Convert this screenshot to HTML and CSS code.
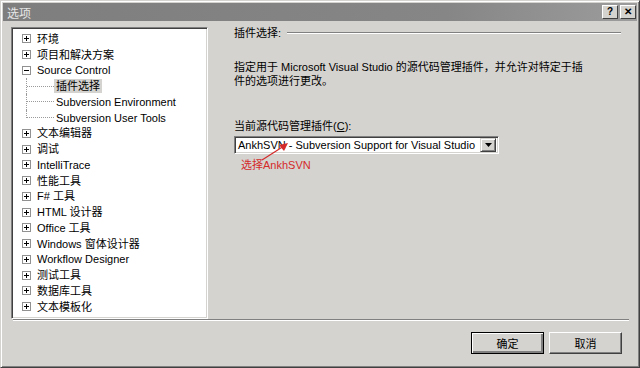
FILE: index.html
```html
<!DOCTYPE html>
<html>

<head>
    <meta charset="utf-8">
    <link rel="stylesheet" href="styles.css">
</head>

<body>
    <div class="window">
        <div class="titlebar">
            <span class="title">选项</span>
            <div class="caption-buttons">
                <span class="cap-btn">?</span>
                <span class="cap-btn">✕</span>
            </div>
        </div>

        <div class="content">
            <div class="main">
                <!-- Options tree -->
                <div class="tree">
                    <div class="row"><span class="exp"></span><span class="label">环境</span></div>
                    <div class="row"><span class="exp"></span><span class="label">项目和解决方案</span></div>
                    <div class="row"><span class="exp open"></span><span class="label">Source Control</span></div>
                    <div class="row child"><span class="branch"></span><span class="label selected">插件选择</span></div>
                    <div class="row child"><span class="branch"></span><span class="label">Subversion Environment</span></div>
                    <div class="row child"><span class="branch last"></span><span class="label">Subversion User Tools</span></div>
                    <div class="row"><span class="exp"></span><span class="label">文本编辑器</span></div>
                    <div class="row"><span class="exp"></span><span class="label">调试</span></div>
                    <div class="row"><span class="exp"></span><span class="label">IntelliTrace</span></div>
                    <div class="row"><span class="exp"></span><span class="label">性能工具</span></div>
                    <div class="row"><span class="exp"></span><span class="label">F# 工具</span></div>
                    <div class="row"><span class="exp"></span><span class="label">HTML 设计器</span></div>
                    <div class="row"><span class="exp"></span><span class="label">Office 工具</span></div>
                    <div class="row"><span class="exp"></span><span class="label">Windows 窗体设计器</span></div>
                    <div class="row"><span class="exp"></span><span class="label">Workflow Designer</span></div>
                    <div class="row"><span class="exp"></span><span class="label">测试工具</span></div>
                    <div class="row"><span class="exp"></span><span class="label">数据库工具</span></div>
                    <div class="row"><span class="exp"></span><span class="label">文本模板化</span></div>
                </div>

                <!-- Settings page -->
                <div class="pane">
                    <div class="group-head">
                        <span>插件选择:</span>
                        <span class="rule"></span>
                    </div>
                    <p class="desc">指定用于 Microsoft Visual Studio 的源代码管理插件，并允许对特定于插件的选项进行更改。</p>
                    <div class="field-label">当前源代码管理插件(<u>C</u>):</div>
                    <div class="combo">
                        <span class="combo-text">AnkhSVN - Subversion Support for Visual Studio</span>
                        <span class="combo-btn">
                            <svg width="7" height="4" viewBox="0 0 7 4"><path d="M0 0h7L3.5 4z" fill="#000"/></svg>
                        </span>
                    </div>

                    <!-- red annotation drawn over the dialog -->
                    <svg class="note-arrow" width="34" height="22" viewBox="0 0 34 22">
                        <path d="M4 19 L26 5" stroke="#d42a2a" stroke-width="1.2" fill="none"/>
                        <path d="M30 2 L21 4 L26 10 z" fill="#d42a2a"/>
                    </svg>
                    <div class="note">选择AnkhSVN</div>
                </div>
            </div>

            <div class="footer">
                <button class="btn default">确定</button>
                <button class="btn">取消</button>
            </div>
        </div>
    </div>
</body>

</html>
```

FILE: styles.css
```css
* {
    box-sizing: border-box
}

body {
    margin: 0;
    background: #ffffff;
    font-family: "Liberation Sans", "Noto Sans CJK SC", sans-serif;
    font-size: 11px;
    color: #000;
}

/* Dialog frame */
.window {
    width: 640px;
    height: 368px;
    background: #d5d3cf;
    border: 1px solid #404040;
    border-top-color: #d5d3cf;
    border-left-color: #d5d3cf;
    box-shadow: inset 1px 1px #ffffff, inset -1px -1px #808080;
    padding: 2px;
    display: flex;
    flex-direction: column;
}

/* Title bar (inactive) */
.titlebar {
    height: 18px;
    flex: none;
    display: flex;
    align-items: center;
    justify-content: space-between;
    padding: 0 1px 0 4px;
    background: linear-gradient(to right, #7e7e7e, #868686 70%, #9c9c9c);
}

.title {
    color: #e6e6e6;
    font-size: 12px;
}

.caption-buttons {
    display: flex;
    gap: 2px;
}

.cap-btn {
    width: 16px;
    height: 14px;
    display: flex;
    align-items: center;
    justify-content: center;
    background: #d5d3cf;
    border: 1px solid;
    border-color: #ffffff #404040 #404040 #ffffff;
    font-size: 10px;
    font-weight: bold;
    line-height: 1;
}

.content {
    flex: 1;
    display: flex;
    flex-direction: column;
    padding: 6px 6px 0 8px;
}

.main {
    height: 292px;
    display: flex;
}

/* Tree view */
.tree {
    width: 197px;
    flex: none;
    background: #ffffff;
    border: 1px solid;
    border-color: #808080 #ffffff #ffffff #808080;
    box-shadow: inset 1px 1px #404040, inset -1px -1px #d5d3cf;
    padding: 3px 2px;
}

.row {
    height: 15.75px;
    display: flex;
    align-items: center;
    white-space: nowrap;
}

.exp {
    width: 9px;
    height: 9px;
    margin: 0 6px 0 8px;
    border: 1px solid #919191;
    background:
        linear-gradient(#000, #000) center / 5px 1px no-repeat,
        linear-gradient(#000, #000) center / 1px 5px no-repeat,
        #ffffff;
}

.exp.open {
    background:
        linear-gradient(#000, #000) center / 5px 1px no-repeat,
        #ffffff;
}

.branch {
    align-self: stretch;
    width: 28px;
    margin-left: 12px;
    border-left: 1px dotted #9a9a9a;
    display: flex;
    align-items: center;
}

.branch::after {
    content: "";
    flex: 1;
    border-top: 1px dotted #9a9a9a;
}

.branch.last {
    align-self: flex-start;
    height: 50%;
    align-items: flex-end;
}

.label {
    padding: 0 2px;
    line-height: 14px;
}

.row .exp + .label {
    padding: 0;
}

.label.selected {
    background: #d5d3cf;
}

/* Right side page */
.pane {
    position: relative;
    flex: 1;
    margin: 0 10px 0 26px;
}

.group-head {
    display: flex;
    align-items: center;
    line-height: 14px;
    margin-top: -1px;
}

.rule {
    flex: 1;
    margin-left: 6px;
    border-top: 1px solid #808080;
    border-bottom: 1px solid #ffffff;
}

.desc {
    margin: 20px 0 0;
    width: 356px;
    line-height: 14px;
}

.field-label {
    margin-top: 31px;
    line-height: 14px;
}

.combo {
    margin-top: 3px;
    width: 265px;
    height: 18px;
    display: flex;
    align-items: center;
    background: #ffffff;
    border: 1px solid;
    border-color: #808080 #ffffff #ffffff #808080;
    box-shadow: inset 1px 1px #404040, inset -1px -1px #d5d3cf;
    padding: 2px 2px 2px 3px;
}

.combo-text {
    flex: 1;
    white-space: nowrap;
}

.combo-btn {
    width: 16px;
    height: 14px;
    display: flex;
    align-items: center;
    justify-content: center;
    background: #d5d3cf;
    border: 1px solid;
    border-color: #d5d3cf #404040 #404040 #d5d3cf;
    box-shadow: inset 1px 1px #ffffff, inset -1px -1px #808080;
}

/* Red annotation */
.note {
    position: absolute;
    left: 7px;
    top: 131px;
    color: #d42a2a;
    font-size: 11px;
    line-height: 14px;
}

.note-arrow {
    position: absolute;
    left: 24px;
    top: 114px;
}

/* Button row */
.footer {
    flex: 1;
    margin: 0 2px;
    border-top: 1px solid #808080;
    box-shadow: inset 0 1px #ffffff;
    padding: 12px 7px 0 0;
    display: flex;
    justify-content: flex-end;
    align-items: flex-start;
    gap: 5px;
}

.btn {
    width: 73px;
    height: 22px;
    font: inherit;
    background: #d5d3cf;
    border: 1px solid;
    border-color: #ffffff #404040 #404040 #ffffff;
    box-shadow: inset -1px -1px #808080;
    padding: 0;
}

.btn.default {
    border: 1px solid #000;
    box-shadow: inset 1px 1px #ffffff, inset -2px -2px #808080;
}
```
